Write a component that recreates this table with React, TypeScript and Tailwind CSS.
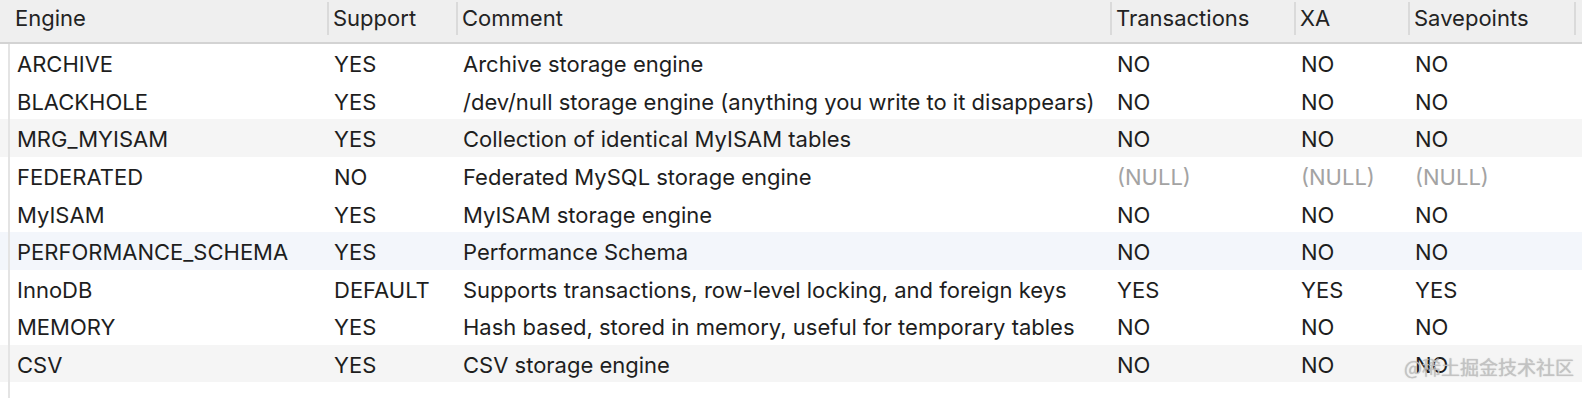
const columns = ['Engine', 'Support', 'Comment', 'Transactions', 'XA', 'Savepoints'];

type Row = {
  engine: string;
  support: string;
  comment: string;
  tx: string | null;
  xa: string | null;
  sp: string | null;
  bg?: string;
};

const rows: Row[] = [
  { engine: 'ARCHIVE', support: 'YES', comment: 'Archive storage engine', tx: 'NO', xa: 'NO', sp: 'NO' },
  { engine: 'BLACKHOLE', support: 'YES', comment: '/dev/null storage engine (anything you write to it disappears)', tx: 'NO', xa: 'NO', sp: 'NO' },
  { engine: 'MRG_MYISAM', support: 'YES', comment: 'Collection of identical MyISAM tables', tx: 'NO', xa: 'NO', sp: 'NO', bg: 'bg-[#f5f5f5]' },
  { engine: 'FEDERATED', support: 'NO', comment: 'Federated MySQL storage engine', tx: null, xa: null, sp: null },
  { engine: 'MyISAM', support: 'YES', comment: 'MyISAM storage engine', tx: 'NO', xa: 'NO', sp: 'NO' },
  { engine: 'PERFORMANCE_SCHEMA', support: 'YES', comment: 'Performance Schema', tx: 'NO', xa: 'NO', sp: 'NO', bg: 'bg-[#f3f6fb]' },
  { engine: 'InnoDB', support: 'DEFAULT', comment: 'Supports transactions, row-level locking, and foreign keys', tx: 'YES', xa: 'YES', sp: 'YES' },
  { engine: 'MEMORY', support: 'YES', comment: 'Hash based, stored in memory, useful for temporary tables', tx: 'NO', xa: 'NO', sp: 'NO' },
  { engine: 'CSV', support: 'YES', comment: 'CSV storage engine', tx: 'NO', xa: 'NO', sp: 'NO', bg: 'bg-[#f5f5f5]' },
];

const grid = 'grid grid-cols-[327px_129px_654px_184px_114px_166px_1fr]';

function Cell({ value, first }: { value: string | null; first?: boolean }) {
  return (
    <div className={`whitespace-nowrap pt-[4px] ${first ? 'pl-[17px]' : 'pl-[7px]'} ${value === null ? 'text-[#a3a3a3]' : 'text-[#1e1e1e]'}`}>
      {value ?? '(NULL)'}
    </div>
  );
}

export default function App() {
  return (
    <div className="w-[1582px] h-[398px] bg-white overflow-hidden relative text-[22px] leading-normal font-['Inter','Liberation_Sans',sans-serif]">
      {/* header */}
      <div className={`${grid} h-[44px] bg-[#efefef] border-b-2 border-[#d3d3d3]`}>
        {columns.map((c, i) => (
          <div key={c} className="flex items-start h-full pt-[2px]">
            {i > 0 && <div className="w-[2px] h-[33px] bg-[#dadada] shrink-0" />}
            <span className={`${i === 0 ? 'pl-[15px]' : 'pl-[4px]'} text-[#232323] whitespace-nowrap`}>{c}</span>
          </div>
        ))}
        <div className="flex items-start h-full pt-[2px]">
          <div className="w-[2px] h-[33px] bg-[#dadada]" />
        </div>
      </div>

      {/* body */}
      <div className="relative">
        {rows.map((r) => (
          <div key={r.engine} className={`${grid} h-[37.6px] items-center ${r.bg ?? ''}`}>
            <Cell value={r.engine} first />
            <Cell value={r.support} />
            <Cell value={r.comment} />
            <Cell value={r.tx} />
            <Cell value={r.xa} />
            <Cell value={r.sp} />
            <div />
          </div>
        ))}
        <div className="absolute left-[8px] top-0 w-[2px] h-[360px] bg-[#e4e4e4]" />
      </div>

      {/* watermark */}
      <div className="absolute left-[1404px] top-[353px] text-[19px] leading-normal text-[#c4c4c4]/90 font-['Noto_Sans_CJK_SC',sans-serif] [text-shadow:0_0_1px_rgba(120,120,120,0.5)]">
        @稀土掘金技术社区
      </div>
    </div>
  );
}
